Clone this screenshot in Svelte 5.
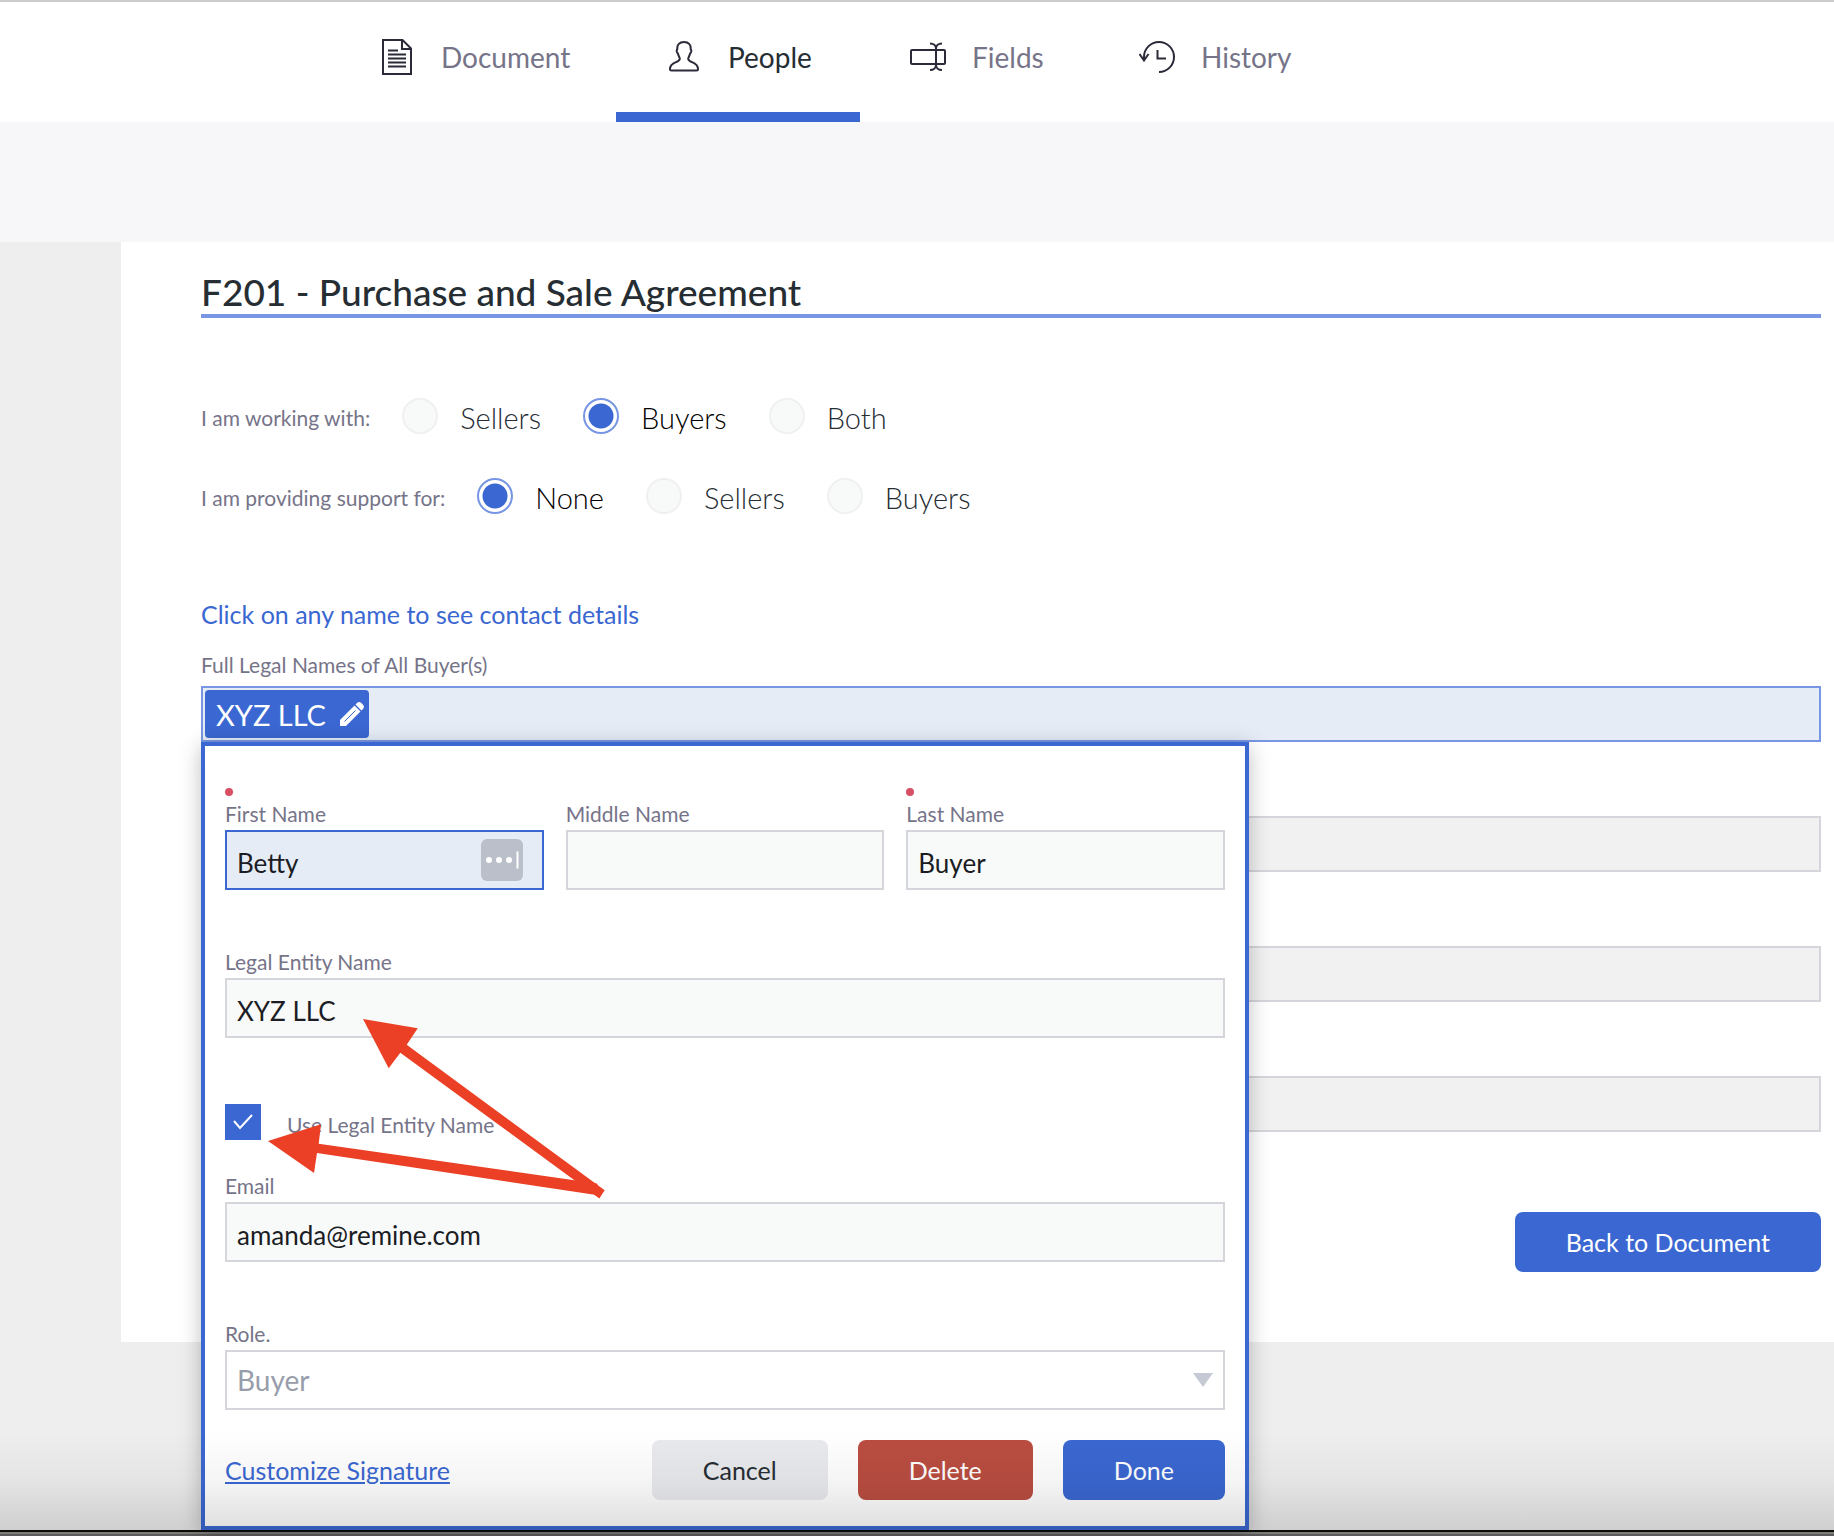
<script lang="ts">
  type Tab = { id: string; label: string };
  type Choice = { name: string; caption: string; options: string[] };

  const tabs: Tab[] = [
    { id: "document", label: "Document" },
    { id: "people", label: "People" },
    { id: "fields", label: "Fields" },
    { id: "history", label: "History" },
  ];

  const choices: Choice[] = [
    { name: "side", caption: "I am working with:", options: ["Sellers", "Buyers", "Both"] },
    { name: "support", caption: "I am providing support for:", options: ["None", "Sellers", "Buyers"] },
  ];

  let active = $state("people");
  let picked = $state<Record<string, string>>({ side: "Buyers", support: "None" });
  let person = $state({
    first: "Betty",
    middle: "",
    last: "Buyer",
    entity: "XYZ LLC",
    useEntity: true,
    email: "amanda@remine.com",
    role: "Buyer",
  });

  const tagName = $derived(person.useEntity ? person.entity : `${person.first} ${person.last}`);
</script>

{#snippet icon(id: string)}
  <svg class="icon" viewBox="0 0 36 36" aria-hidden="true">
    {#if id === "document"}
      <path d="M4 1h19.500l8.500 8.500V35H4z" />
      <path d="M23 1v9h9" />
      <path d="M9 11.500h10M9 15.500h18M9 19.500h18M9 23.500h18M9 27.500h18" />
    {:else if id === "people"}
      <path
        d="M18 3c-4.600 0-7 2.700-6.700 7 0 .600-.8.900-.6 2.200.3 1.600 1 1.900 1.300 2.500.5 2.600 1.800 3.500 1.800 5 0 4.300-9.800 2.600-9.800 10.300 0 1 .7 1.500 1.600 1.500h24.800c.9 0 1.600-.5 1.600-1.500 0-7.700-9.800-6-9.800-10.300 0-1.500 1.300-2.400 1.800-5 .3-.6 1-.9 1.300-2.500.2-1.300-.6-1.600-.6-2.200.3-4.300-2.100-7-6.700-7z"
      />
    {:else if id === "fields"}
      <rect x="1" y="11" width="34" height="14" rx="1" />
      <path d="M26 9v18M20 4.500c3.500 0 6 2 6 5 0-3 2.500-5 6-5M20 31c3.500 0 6-2 6-5 0 3 2.500 5 6 5" />
    {:else}
      <path d="M5 20.500V18a15 15 0 1 1 15 15" />
      <path d="M.5 15 5 21.500 9.500 15M18.500 11v8.500h8.500" />
    {/if}
  </svg>
{/snippet}

<div class="page">
  <nav class="tabs">
    {#each tabs as tab}
      <button type="button" class="tab" class:active={active === tab.id} onclick={() => (active = tab.id)}>
        {@render icon(tab.id)}
        {tab.label}
      </button>
    {/each}
  </nav>
  <div class="band"></div>

  <main>
    <section class="sheet">
      <h1>F201 - Purchase and Sale Agreement</h1>

      <div class="choices">
        {#each choices as choice}
          <div class="choice" role="radiogroup" aria-labelledby="{choice.name}-caption">
            <span class="caption" id="{choice.name}-caption">{choice.caption}</span>
            {#each choice.options as option}
              <label class="option" class:picked={picked[choice.name] === option}>
                <input type="radio" name={choice.name} value={option} bind:group={picked[choice.name]} />
                <span>{option}</span>
              </label>
            {/each}
          </div>
        {/each}
      </div>

      <p class="hint">Click on any name to see contact details</p>
      <p class="legal" id="names-label">Full Legal Names of All Buyer(s)</p>

      <div class="names" role="group" aria-labelledby="names-label">
        <button type="button" class="tag">
          {tagName}
          <svg class="pencil" viewBox="0 0 24 24" aria-hidden="true">
            <path d="M0 24v-6L14.500 3.500l6 6L6 24z" />
            <path d="M15.500 2.500 17 1c1.300-1.300 3-1.300 4.300 0L23 2.700c1.300 1.300 1.300 3 0 4.300l-1.500 1.500z" />
            <path class="crease" d="M4.500 19.500 15.500 8.500" />
          </svg>
        </button>

        <form class="popup" onsubmit={(e) => e.preventDefault()}>
          <div class="row">
            <div class="field">
              <span class="required"></span>
              <label for="first">First Name</label>
              <div class="filled">
                <input id="first" class="current" type="text" bind:value={person.first} />
                <svg class="autofill" viewBox="0 0 42 42" aria-hidden="true">
                  <rect width="42" height="42" rx="6" />
                  <circle cx="8" cy="21" r="3" />
                  <circle cx="18" cy="21" r="3" />
                  <circle cx="28" cy="21" r="3" />
                  <path d="M36.500 12.500v17" />
                </svg>
              </div>
            </div>
            <div class="field">
              <label for="middle">Middle Name</label>
              <input id="middle" type="text" bind:value={person.middle} />
            </div>
            <div class="field">
              <span class="required"></span>
              <label for="last">Last Name</label>
              <input id="last" type="text" bind:value={person.last} />
            </div>
          </div>

          <div class="field">
            <label for="entity">Legal Entity Name</label>
            <input id="entity" type="text" bind:value={person.entity} />
          </div>

          <label class="check">
            <input type="checkbox" bind:checked={person.useEntity} />
            <span>Use Legal Entity Name</span>
          </label>

          <div class="field">
            <label for="email">Email</label>
            <input id="email" type="email" bind:value={person.email} />
          </div>

          <div class="field">
            <label for="role">Role.</label>
            <select id="role" bind:value={person.role}>
              <option>Buyer</option>
              <option>Seller</option>
            </select>
          </div>

          <div class="actions">
            <a href="#signature">Customize Signature</a>
            <button type="button" class="btn cancel">Cancel</button>
            <button type="button" class="btn delete">Delete</button>
            <button type="submit" class="btn done">Done</button>
          </div>

          <!-- callout arrows to the entity name and its tick box -->
          <svg class="arrows" viewBox="0 0 350 190" aria-hidden="true">
            <path d="M103 9 157.700 18.300 146.700 34.700 344.700 180.300 339.300 188.500 140.300 42.700 128.700 58.300z" />
            <path d="M8 131 61 114.300 58.700 133.700 337 173.500 341 183 333 184.500 57 143 54 163z" />
          </svg>
        </form>
      </div>

      <input class="blank" type="text" aria-label="Buyer line 2" disabled />
      <input class="blank" type="text" aria-label="Buyer line 3" disabled />
      <input class="blank" type="text" aria-label="Buyer line 4" disabled />

      <div class="back">
        <button type="button" class="btn done">Back to Document</button>
      </div>
    </section>
    <div class="fade"></div>
  </main>
  <div class="edge"></div>
</div>

<style>
  :global(body) {
    margin: 0;
    background: #eee;
  }
  .page {
    display: flex;
    flex-direction: column;
    min-height: 100vh;
    font-family: Lato, "Open Sans", sans-serif;
    color: #262d33;
  }
  .page :global(*) {
    box-sizing: border-box;
  }
  input,
  select,
  button {
    font: inherit;
    color: inherit;
  }

  .tabs {
    display: grid;
    grid-template-columns: 287px 244px 229px 244px;
    height: 122px;
    padding-left: 329px;
    border-top: 2px solid #ccc;
    background: #fff;
  }
  .tab {
    display: flex;
    align-items: center;
    gap: 26px;
    padding: 0 0 0 50px;
    border: none;
    border-bottom: 10px solid transparent;
    background: transparent;
    font-size: 28px;
    color: #767489;
    cursor: pointer;
  }
  .tab.active {
    border-color: #3a67d1;
    color: #262d33;
  }
  .icon {
    width: 36px;
    height: 36px;
    flex: none;
    fill: none;
    stroke: #2b2a38;
    stroke-width: 2;
  }
  .band {
    height: 120px;
    background: #f7f7f9;
  }

  main {
    position: relative;
    flex: 1;
    padding: 0 0 188px 121px;
  }
  .sheet {
    padding: 28px 13px 70px 80px;
    background: #fff;
  }
  h1 {
    margin: 0 0 80px;
    border-bottom: 4px solid #7896e4;
    font-size: 37px;
    font-weight: 500;
    line-height: 44px;
  }

  .choices {
    display: grid;
    gap: 44px;
  }
  .choice {
    display: flex;
    align-items: center;
    height: 36px;
  }
  .caption {
    margin-right: 32px;
    padding-top: 2px;
    font-size: 21px;
    color: #767489;
  }
  .option {
    display: flex;
    align-items: center;
    gap: 22px;
    margin-right: 42px;
    font-size: 29px;
    font-weight: 300;
  }
  .option span {
    padding-top: 2px;
  }
  .picked {
    color: #000;
  }
  .option input {
    appearance: none;
    width: 36px;
    height: 36px;
    margin: 0;
    border: 2px solid #f0f0f0;
    border-radius: 50%;
    background: #f8faf9;
  }
  .option input:checked {
    border-color: #7896e4;
    background: radial-gradient(circle, #3a67d1 12px, #fff 13px);
  }

  .hint {
    margin: 86px 0 24px;
    font-size: 25px;
    line-height: 28px;
    padding-bottom: 2px;
    color: #3a67d1;
  }
  .legal {
    margin: 0 0 10px;
    font-size: 21px;
    line-height: 22px;
    color: #767489;
  }
  .names {
    position: relative;
    height: 56px;
    padding: 2px;
    border: 2px solid #7896e4;
    background: #e5ecf6;
  }
  .tag {
    display: flex;
    align-items: center;
    gap: 14px;
    height: 48px;
    padding: 0 5px 0 11px;
    border: none;
    border-radius: 4px;
    background: #3a67d1;
    font-size: 29px;
    color: #fff;
  }
  .pencil {
    width: 24px;
    height: 24px;
    fill: #fff;
  }
  .crease {
    stroke: #3a67d1;
    stroke-width: 1;
  }

  .popup {
    position: absolute;
    top: 54px;
    left: -2px;
    z-index: 1;
    width: 1048px;
    padding: 42px 20px 26px;
    border: 4px solid #3a67d1;
    background: #fff;
    box-shadow: 0 4px 20px rgba(0, 0, 0, 0.25);
  }
  .row {
    display: grid;
    grid-template-columns: repeat(3, 1fr);
    align-items: end;
    gap: 22px;
  }
  .field {
    display: flex;
    flex-direction: column;
    margin-bottom: 62px;
  }
  .field label {
    margin-bottom: 6px;
    font-size: 21px;
    line-height: 20px;
    color: #767489;
  }
  .required {
    width: 8px;
    height: 8px;
    margin-bottom: 8px;
    border-radius: 50%;
    background: #d94f64;
  }
  .field input,
  .field select {
    width: 100%;
    height: 60px;
    padding: 6px 10px 0;
    border: 2px solid #d5d5db;
    border-radius: 0;
    outline: none;
    background: #f8faf9;
    font-size: 26px;
    color: #1b1c24;
  }
  .field input.current {
    border-color: #3a67d1;
    background: #e5ecf6;
  }
  .field select {
    appearance: none;
    padding-top: 0;
    background: #fff
      url("data:image/svg+xml,%3Csvg xmlns='http://www.w3.org/2000/svg' width='20' height='14'%3E%3Cpath d='M0 0h20L10 14z' fill='%23c6cad5'/%3E%3C/svg%3E")
      no-repeat right 10px center;
    font-size: 28px;
    color: #979dab;
  }
  .filled {
    position: relative;
  }
  .autofill {
    position: absolute;
    top: 9px;
    right: 21px;
    width: 42px;
    height: 42px;
    fill: #fff;
    stroke: #fff;
    stroke-width: 0;
  }
  .autofill rect {
    fill: #bbbfc9;
  }
  .autofill path {
    stroke-width: 2;
  }
  .check {
    display: flex;
    align-items: center;
    gap: 26px;
    margin: 66px 0 36px;
    font-size: 21px;
    color: #767489;
  }
  .check span {
    padding-top: 4px;
  }
  .check input {
    appearance: none;
    width: 36px;
    height: 36px;
    margin: 0;
    border: 2px solid #d5d5db;
  }
  .check input:checked {
    border-color: #3a67d1;
    background: #3a67d1
      url("data:image/svg+xml,%3Csvg xmlns='http://www.w3.org/2000/svg' width='20' height='16'%3E%3Cpath d='M1 7l6 7L19 1' fill='none' stroke='white' stroke-width='2'/%3E%3C/svg%3E")
      no-repeat center;
  }

  .actions {
    display: flex;
    align-items: center;
    gap: 30px;
    margin-top: -32px;
  }
  .actions a {
    margin-right: auto;
    font-size: 25px;
    color: #3a67d1;
  }
  .btn {
    height: 60px;
    padding: 0 51px;
    border: none;
    border-radius: 8px;
    font-size: 25px;
    line-height: 28px;
    color: #fff;
  }
  .cancel {
    background: #e9eaed;
    color: #262d33;
  }
  .delete {
    background: #ba4d41;
  }
  .done {
    background: #3a67d1;
  }
  .arrows {
    position: absolute;
    top: 264px;
    left: 55px;
    width: 350px;
    height: 190px;
    fill: #eb4025;
    pointer-events: none;
  }

  .blank {
    display: block;
    width: 100%;
    height: 56px;
    margin-top: 74px;
    border: 2px solid #d5d5db;
    background: #f1f1f1;
  }
  .back {
    display: flex;
    justify-content: flex-end;
    margin-top: 80px;
  }

  .fade {
    position: absolute;
    right: 0;
    bottom: 0;
    left: 0;
    z-index: 2;
    height: 100px;
    background: linear-gradient(transparent, rgba(0, 0, 0, 0.04) 50%, rgba(0, 0, 0, 0.13));
    pointer-events: none;
  }
  .edge {
    height: 6px;
    border-top: 2px solid #0b0d0b;
    border-bottom: 2px solid #5e5c5c;
    background: #7d7d7a;
  }
</style>
